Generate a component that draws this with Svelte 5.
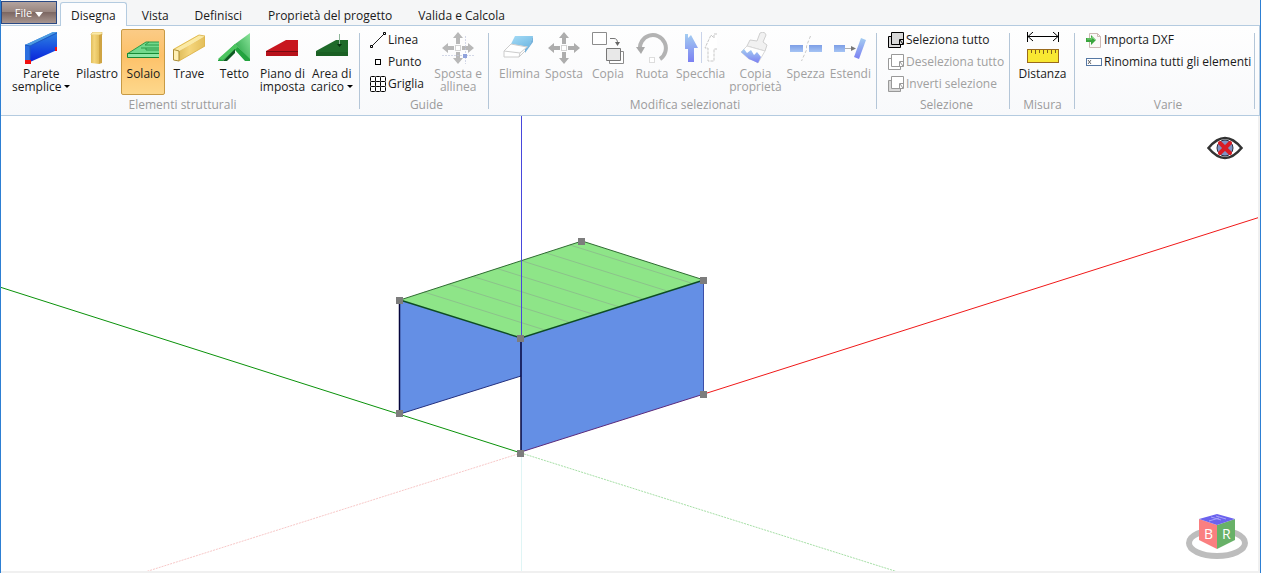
<script>
  const tabs = ["Disegna", "Vista", "Definisci", "Proprietà del progetto", "Valida e Calcola"];

  const groups = [
    {
      name: "Elementi strutturali",
      cls: "structure",
      big: [
        { icon: "wall", lines: ["Parete", "semplice"], menu: true },
        { icon: "pillar", lines: ["Pilastro"] },
        { icon: "slab", lines: ["Solaio"] },
        { icon: "beam", lines: ["Trave"] },
        { icon: "roof", lines: ["Tetto"] },
        { icon: "plane", lines: ["Piano di", "imposta"] },
        { icon: "area", lines: ["Area di", "carico"], menu: true },
      ],
    },
    {
      name: "Guide",
      cls: "guides",
      small: [
        { icon: "line", label: "Linea" },
        { icon: "point", label: "Punto" },
        { icon: "grid", label: "Griglia" },
      ],
      big: [{ icon: "align", lines: ["Sposta e", "allinea"], disabled: true }],
    },
    {
      name: "Modifica selezionati",
      cls: "edit",
      big: [
        { icon: "eraser", lines: ["Elimina"], disabled: true },
        { icon: "move", lines: ["Sposta"], disabled: true },
        { icon: "copy", lines: ["Copia"], disabled: true },
        { icon: "rotate", lines: ["Ruota"], disabled: true },
        { icon: "mirror", lines: ["Specchia"], disabled: true },
        { icon: "brush", lines: ["Copia", "proprietà"], disabled: true },
        { icon: "split", lines: ["Spezza"], disabled: true },
        { icon: "extend", lines: ["Estendi"], disabled: true },
      ],
    },
    {
      name: "Selezione",
      cls: "selection",
      small: [
        { icon: "selectAll", label: "Seleziona tutto" },
        { icon: "deselect", label: "Deseleziona tutto", disabled: true },
        { icon: "invert", label: "Inverti selezione", disabled: true },
      ],
    },
    {
      name: "Misura",
      cls: "measure",
      big: [{ icon: "ruler", lines: ["Distanza"] }],
    },
    {
      name: "Varie",
      cls: "misc",
      small: [
        { icon: "import", label: "Importa DXF" },
        { icon: "rename", label: "Rinomina tutti gli elementi" },
      ],
    },
  ];

  const nodes = [
    [582, 241],
    [400, 300],
    [704, 280],
    [521, 338],
    [400, 413],
    [521, 453],
    [704, 394],
  ];

  // joist lines across the slab, parallel to its short side
  const joists = [1, 2, 3, 4, 5, 6, 7].map((i) => {
    const x = 400 + (182 * i) / 7.5;
    const y = 300 - (59 * i) / 7.5;
    return { x1: x, y1: y, x2: x + 121, y2: y + 38 };
  });

  let activeTab = $state("Disegna");
  let tool = $state("slab");
</script>

{#snippet bigIcon(name)}
  <svg class="icon32" viewBox="0 0 32 32" aria-hidden="true">
    {#if name === "wall"}
      <path d="M0 13 28 0 32 0V18L5 30H0Z" fill="url(#gWall)" />
      <path d="M0 13 28 0H32L5 14Z" fill="#4c9be0" />
      <path d="M0 13 5 14V30H0Z" fill="#2c6fe0" />
      <path d="M5 14V30M0 13 5 14 32 1" stroke="#1f59c4" fill="none" />
      <path d="M0 28H6V32H0ZM30 15H32V19H30Z" fill="#f01010" />
    {:else if name === "pillar"}
      <path d="M10 2 12 0H21V3H10Z" fill="#fbe9a6" stroke="#d9b95e" stroke-width=".6" />
      <path d="M10 3H18V32L10 31Z" fill="url(#gWood)" />
      <path d="M18 3 21 2V31L18 32Z" fill="#cfa443" />
    {:else if name === "slab"}
      <path d="M0 22 19 10H32V22Z" fill="#71d88c" />
      <path d="M0 22 19 10H32M22 10 18 13H32M14 16H32M19 16V18H32" fill="none" stroke="#2d9a49" />
      <path d="M1 22H32V25H1Z" fill="#8fe6a5" />
      <path d="M.5 21.500H32M.5 21.500V25.500H32" fill="none" stroke="#188a35" />
    {:else if name === "beam"}
      <path d="M0 17 25 3 32 4 6 19Z" fill="#fbeaa5" />
      <path d="M6 19 32 4V14L6 29Z" fill="url(#gWood)" />
      <path d="M.5 17.500 6 19V29L.5 28Z" fill="#fff0b5" stroke="#a98b35" />
      <path d="M.5 17.500 26 3 32 4V14L6 29" fill="none" stroke="#d9ad3e" stroke-width=".8" />
    {:else if name === "roof"}
      <path d="M17 12 32 1V28Z" fill="url(#gGreen)" />
      <path d="M0 28 17 12 32 27V29H27L17 18 5 29H0Z" fill="#23a33f" />
      <path d="M0 27 17 12 20 15 5 28Z" fill="#4cc560" />
      <path d="M5 29 17 17V21L9 29Z" fill="#0e5b23" />
    {:else if name === "plane"}
      <path d="M0 19 20 8H32V24H0Z" fill="#c8161f" />
      <path d="M0 19H32V24H0Z" fill="#b8121b" />
      <path d="M0 19.500H32" stroke="#7a0b12" />
    {:else if name === "area"}
      <path d="M0 19 20 8H32V24H0Z" fill="#1f6a2a" />
      <path d="M0 20H32V24H0Z" fill="#1b6024" />
      <path d="M23.500 2V12" stroke="#8fb79a" />
      <path d="M21 12H26L23.500 15Z" fill="#06330e" />
    {:else if name === "align" || name === "move"}
      <path
        d="M16 0 21 6H18V12H14V6H11ZM16 32 21 26H18V20H14V26H11ZM0 16 6 11V14H12V18H6V21ZM32 16 26 11V14H20V18H26V21Z"
        fill={name === "align" ? "#b8b8b8" : "#adadad"}
      />
      <rect x="13.500" y="13.500" width="5" height="5" fill="#fff" stroke="#d4d4d4" />
      {#if name === "align"}
        <path d="M23.500 4V32M0 23.500H32" stroke="#c3c9e0" stroke-dasharray="2 1" opacity=".7" />
        <rect x="21" y="22" width="4" height="4" fill="#8fa2dc" />
      {/if}
    {:else if name === "eraser"}
      <path d="M12 4H30L26 15 8 12Z" fill="url(#gEraser)" />
      <path d="M30 4V10L22 21V17L26 14Z" fill="#76b3dc" />
      <path d="M1 19 8 12 24 15 17 21ZM1 19V25H16L22 19M17 21 16 25" fill="#fff" stroke="#ccc" />
    {:else if name === "copy"}
      <path d="M.5.500H14.500V12.500H.5Z" fill="#fff" stroke="#8c8c8c" />
      <path d="M18 6.500H22Q25.500 6.500 25.500 11" fill="none" stroke="#777" />
      <path d="M23 10H28L25.500 14Z" fill="#666" />
      <path d="M17.500 19.500H31.500V31.500H17.500Z" fill="#fff" stroke="#8c8c8c" />
      <path d="M14.500 16.500H28.500V28.500H14.500Z" fill="#e8e8e8" stroke="#777" />
    {:else if name === "rotate"}
      <path d="M4 18A13 13 0 1 1 24 27" fill="none" stroke="#b3b3b3" stroke-width="4" />
      <path d="M0 15H9L5 22Z" fill="#a9a9a9" />
      <rect x="13.500" y="25.500" width="5" height="5" fill="#fff" stroke="#ddd" />
    {:else if name === "mirror"}
      <path d="M0 2H3V6L6 3 13 16H9V30H3V17H0Z" fill="url(#gBlue)" />
      <path d="M16.500 0V31" stroke="#c9d3ea" />
      <path d="M32 2H29V6L26 3 20 16H23V29H29V17H32" fill="#fff" stroke="#c7c7c7" stroke-dasharray="3 1" />
    {:else if name === "brush"}
      <path d="M20 1Q25-1 26 3L23 10 27 13 25 19 7 14 10 8 17 9Z" fill="#f1f1f1" stroke="#cfcfcf" />
      <path d="M1 20 7 14 25 19 18 31 13 28 9 27Z" fill="#fff" stroke="#d8d8d8" />
      <path d="M1 20 4 17 7 21 11 18 14 23 17 20 21 25 18 31 9 27Z" fill="url(#gBlue)" />
    {:else if name === "split"}
      <path d="M0 13H13V20H0ZM19 13H32V20H19Z" fill="url(#gBlueH)" />
      <path d="M20.500 4 16.500 14V18L11.500 29" fill="none" stroke="#c9c9c9" stroke-dasharray="3 2" />
    {:else if name === "extend"}
      <path d="M0 13H11V20H0Z" fill="url(#gBlueH)" />
      <path d="M11 16.500H20" stroke="#b0b0b0" />
      <path d="M17 14 22 16.500 17 19Z" fill="#777" />
      <path d="M27 6 32 8 25 27 20 25Z" fill="url(#gBlue)" />
    {:else if name === "ruler"}
      <path d="M.5 0V10M31.500 0V10M1 4.500H31M6 0 1 4.500 6 9M26 0 31 4.500 26 9" fill="none" stroke="#000" />
      <rect x=".5" y="17.500" width="31" height="13" fill="#f8e832" stroke="#9a6a1c" />
      <path d="M4.500 18V21M8.500 18V22M12.500 18V21M16.500 18V22M20.500 18V21M24.500 18V22M28.500 18V21" stroke="#806020" />
    {/if}
  </svg>
{/snippet}

{#snippet smallIcon(name)}
  <svg class="icon16" viewBox="0 0 16 16" aria-hidden="true">
    {#if name === "line"}
      <path d="M2 14 14 2" stroke="#222" />
      <path d="M.5 13.500H2.500V15.500H.5ZM13.500.500H15.500V2.500H13.500Z" fill="#fff" stroke="#000" />
    {:else if name === "point"}
      <rect x="5.500" y="5.500" width="5" height="5" fill="#fff" stroke="#000" />
    {:else if name === "grid"}
      <g fill="#fff" stroke="#000">
        {#each [0.5, 5.5, 10.5] as y}
          {#each [0.5, 5.5, 10.5] as x}
            <rect {x} {y} width="5" height="5" rx="1" />
          {/each}
        {/each}
      </g>
    {:else if name === "selectAll" || name === "deselect" || name === "invert"}
      {@const ink = name === "selectAll" ? "#000" : "#999"}
      <path d="M.5 4.500H12.500V15.500H.5Z" fill={name === "deselect" ? "#fff" : "#d8d8d8"} stroke={ink} />
      <path d="M3.500.500H15.500V12.500H3.500Z" fill={name === "selectAll" ? "#d8d8d8" : "#fff"} stroke={ink} />
      <path d="M11.500 12V7.500H15M12 8 15 12" fill="none" stroke={ink} />
    {:else if name === "import"}
      <path d="M3.500 1.500H11.500L14.500 4.500V15.500H3.500Z" fill="#fbf8f7" stroke="#cdb9b4" />
      <path d="M11.500 1.500V4.500H14.500" fill="none" stroke="#cdb9b4" />
      <path d="M0 6H5V3L10 8 5 13V10H0Z" fill="#3aa53e" />
      <path d="M1 7H6V5L9 8" fill="none" stroke="#7fd27c" />
    {:else if name === "rename"}
      <rect x=".5" y="4.500" width="15" height="7" fill="#fff" stroke="#5678a4" />
      <path d="M2 6 5 10M5 6 2 10" stroke="#444" stroke-width=".8" />
    {/if}
  </svg>
{/snippet}

<svg class="defs" aria-hidden="true">
  <defs>
    <linearGradient id="gWall" x1="0" y1="0" x2="0" y2="1">
      <stop offset="0" stop-color="#2f86e0" />
      <stop offset=".6" stop-color="#1548e0" />
      <stop offset="1" stop-color="#0a22d8" />
    </linearGradient>
    <linearGradient id="gWood" x1="0" y1="0" x2="1" y2="0">
      <stop offset="0" stop-color="#e0bd5c" />
      <stop offset=".4" stop-color="#f5d67c" />
      <stop offset="1" stop-color="#e3be5a" />
    </linearGradient>
    <linearGradient id="gGreen" x1="1" y1="0" x2="0" y2="1">
      <stop offset="0" stop-color="#8be49c" />
      <stop offset="1" stop-color="#1d9c3b" />
    </linearGradient>
    <linearGradient id="gEraser" x1="0" y1="0" x2="1" y2="1">
      <stop offset="0" stop-color="#a6dcf6" />
      <stop offset="1" stop-color="#6db6e2" />
    </linearGradient>
    <linearGradient id="gBlue" x1="0" y1="0" x2="0" y2="1">
      <stop offset="0" stop-color="#a4cdf1" />
      <stop offset="1" stop-color="#7b80f2" />
    </linearGradient>
    <linearGradient id="gBlueH" x1="0" y1="0" x2="0" y2="1">
      <stop offset="0" stop-color="#7d9ee6" />
      <stop offset="1" stop-color="#a5c4f4" />
    </linearGradient>
  </defs>
</svg>

<div class="window">
  <header class="tabbar">
    <button class="file">File <span class="arrow"></span></button>
    <div class="tabs" role="tablist">
      {#each tabs as tab}
        <button
          class="tab"
          class:active={activeTab === tab}
          role="tab"
          aria-selected={activeTab === tab}
          onclick={() => (activeTab = tab)}>{tab}</button
        >
      {/each}
    </div>
  </header>

  <div class="ribbon">
    {#each groups as group}
      <section class="group {group.cls}">
        <div class="items">
          {#if group.small}
            <div class="stack">
              {#each group.small as item}
                <button class="small" disabled={item.disabled}>
                  {@render smallIcon(item.icon)}
                  <span>{item.label}</span>
                </button>
              {/each}
            </div>
          {/if}
          {#each group.big ?? [] as item}
            <button
              class="big"
              class:selected={tool === item.icon}
              disabled={item.disabled}
              onclick={() => (tool = item.icon)}
            >
              {@render bigIcon(item.icon)}
              <span class="label">
                {#each item.lines as line, i}
                  <span class="row">
                    {line}{#if item.menu && i === item.lines.length - 1}<span class="caret"></span>{/if}
                  </span>
                {/each}
              </span>
            </button>
          {/each}
        </div>
        <div class="group-name">{group.name}</div>
      </section>
    {/each}
  </div>

  <main class="viewport">
    <svg class="scene" viewBox="1 116 1257 455" preserveAspectRatio="xMidYMid slice" role="img" aria-label="Modello 3D">
      <g fill="none">
        <path d="M521 453 145 572" stroke="#f8c8c8" stroke-dasharray="2 1" />
        <path d="M521 453 898 572" stroke="#a6dfa6" stroke-dasharray="2 1" />
        <path d="M521.500 453V572" stroke="#dff5f5" />
        <path d="M521 453-60 268" stroke="#0a920a" />
        <path d="M704 394 1320 198" stroke="#f01818" />
      </g>
      <path d="M400 300 521 338V376L400 414Z" fill="#648fe5" />
      <path d="M521 338 704 280V394L521 452Z" fill="#648fe5" />
      <path d="M400 300 582 241 704 280 521 338Z" fill="#8ee588" />
      <g stroke="#8cc28b">
        {#each joists as j}
          <line x1={j.x1} y1={j.y1} x2={j.x2} y2={j.y2} />
        {/each}
      </g>
      <g fill="none">
        <path d="M400 300 582 241 704 280" stroke="#2f6b32" />
        <path d="M400 300 521 338 704 280" stroke="#0d4c24" stroke-width="1.500" />
        <path d="M399.500 300V414" stroke="#05053c" stroke-width="1.500" />
        <path d="M400 414 521 376" stroke="#24307e" />
        <path d="M521 338V452" stroke="#05053c" stroke-width="1.500" />
        <path d="M521 452 704 394" stroke="#5a2a7c" />
        <path d="M703.500 280V394" stroke="#3c4fa8" />
        <path d="M521.500 116V338" stroke="#4848dc" />
      </g>
      <g fill="#7d7d7d">
        {#each nodes as [x, y]}
          <rect x={x - 4} y={y - 3} width="7" height="7" />
        {/each}
      </g>
    </svg>

    <button class="eye" aria-label="Nascondi">
      <svg viewBox="0 0 36 24" aria-hidden="true">
        <path d="M1.500 12Q18-8 34.500 12Q18 32 1.500 12Z" fill="#fff" stroke="#333" stroke-width="2.500" />
        <circle cx="18" cy="12" r="8" fill="#7f93c4" stroke="#2c2c3c" />
        <circle cx="18" cy="12" r="3" fill="#30406c" />
        <path d="M13 7 23 17M23 7 13 17" stroke="#d91c24" stroke-width="4" stroke-linecap="round" />
      </svg>
    </button>

    <svg class="cube" viewBox="0 0 62 46" role="img" aria-label="Orientamento">
      <ellipse cx="31" cy="29" rx="28" ry="13" fill="none" stroke="#bdbdbd" stroke-width="6" />
      <path d="M13 5 31 11V35L13 26Z" fill="#fa7f80" />
      <path d="M31 11 49 5V26L31 35Z" fill="#68b168" />
      <path d="M13 5 31 0 49 5 31 11Z" fill="#6b62ee" />
      <path d="M25 3 35 6M30 2 40 5M23 7 33 4" stroke="#a9a4f8" />
      <text x="18" y="25">B</text>
      <text x="36" y="25">R</text>
    </svg>
  </main>
</div>

<style>
  :global(body) {
    margin: 0;
    background: #f0f0f0;
  }

  .defs {
    position: absolute;
    width: 0;
    height: 0;
  }

  .window {
    box-sizing: border-box;
    display: flex;
    flex-direction: column;
    height: 100vh;
    border-left: 1px solid #2d7fd3;
    border-right: 1px solid #2d7fd3;
    font-family: "Segoe UI", "Open Sans", sans-serif;
    font-size: 12px;
    color: #1a1a1a;
    background: #f0f0f0;
  }

  button {
    box-sizing: border-box;
    margin: 0;
    font: inherit;
    color: inherit;
    background: none;
    border: 1px solid transparent;
    white-space: nowrap;
  }

  .tabbar {
    display: flex;
    align-items: flex-start;
    gap: 3px;
    height: 25px;
    padding-top: 1px;
    box-sizing: border-box;
    background: #f5f6f7;
  }

  .file {
    width: 56px;
    height: 23px;
    padding: 0;
    font-size: 11px;
    line-height: 20px;
    color: #fff;
    border-color: #2b4a85;
    background: linear-gradient(#b3a39e, #98857f 48%, #7d6863 50%, #a89690);
  }

  .arrow {
    display: inline-block;
    border: 4px solid transparent;
    border-top: 5px solid #fff;
    border-bottom: 0;
  }

  .tabs {
    display: flex;
    gap: 4px;
    padding-top: 1px;
  }

  .tab {
    height: 24px;
    padding: 2px 10px 0;
    line-height: 22px;
    border-bottom: 0;
    border-radius: 3px 3px 0 0;
  }

  .tab.active {
    background: #fdfdfe;
    border-color: #b4cbe0;
    position: relative;
  }

  .ribbon {
    display: flex;
    border: 1px solid #b4cbe0;
    border-width: 1px 1px 1px 0;
    background: linear-gradient(#fefefe, #f8f9fb);
  }

  .group {
    box-sizing: border-box;
    display: flex;
    flex-direction: column;
    margin: 3px 0 2px;
    height: 84px;
    background: linear-gradient(#b4c6d8, #b4c6d8) right 4px / 1px 76px no-repeat;
    background-position: right 4px;
  }

  .structure {
    width: 359px;
    padding: 0 5px 0 9px;
  }

  .guides {
    width: 129px;
    padding: 0 5px 0 9px;
  }

  .edit {
    width: 388px;
    padding: 0 4px 0 8px;
  }

  .selection {
    width: 133px;
    padding: 0 4px 0 10px;
  }

  .measure {
    width: 65px;
    padding: 0 4px;
  }

  .misc {
    width: 180px;
    padding: 0 4px 0 10px;
  }

  .items {
    display: flex;
    flex: none;
    justify-content: space-between;
    height: 66px;
  }

  .measure .items {
    justify-content: center;
  }

  .big {
    display: flex;
    flex-direction: column;
    align-items: center;
    gap: 3px;
    min-width: 44px;
    height: 66px;
    padding: 2px 1px 0;
    line-height: 13px;
    border-radius: 2px;
  }

  .big.selected {
    border-color: #c79a45;
    background: linear-gradient(#fbcb86, #fdc169 40%, #fdd88c);
  }

  .label,
  .row {
    display: block;
  }

  .caret {
    display: inline-block;
    margin-left: 3px;
    vertical-align: 3px;
    border: 3px solid transparent;
    border-top-color: #000;
    border-bottom: 0;
  }

  .small {
    display: flex;
    align-items: center;
    gap: 2px;
    height: 22px;
    padding: 0;
    line-height: 20px;
  }

  button:disabled {
    color: #a0a0a0;
  }

  .icon32 {
    flex: none;
    width: 32px;
    height: 32px;
  }

  .icon16 {
    flex: none;
    width: 16px;
    height: 16px;
  }

  .group-name {
    padding-top: 2px;
    line-height: 16px;
    text-align: center;
    color: #9b9b9b;
  }

  .viewport {
    position: relative;
    flex: 1;
    min-height: 0;
    margin: 0 2px 2px 0;
    background: #fff;
    overflow: hidden;
  }

  .scene {
    display: block;
    width: 100%;
    height: 100%;
  }

  .eye {
    position: absolute;
    top: 20px;
    right: 15px;
    width: 36px;
    height: 24px;
    padding: 0;
    border: 0;
  }

  .eye svg {
    display: block;
    width: 100%;
    height: 100%;
  }

  .cube {
    position: absolute;
    right: 10px;
    bottom: 11px;
    width: 62px;
    height: 46px;
  }

  .cube text {
    font-size: 14px;
    fill: #fff;
  }
</style>
